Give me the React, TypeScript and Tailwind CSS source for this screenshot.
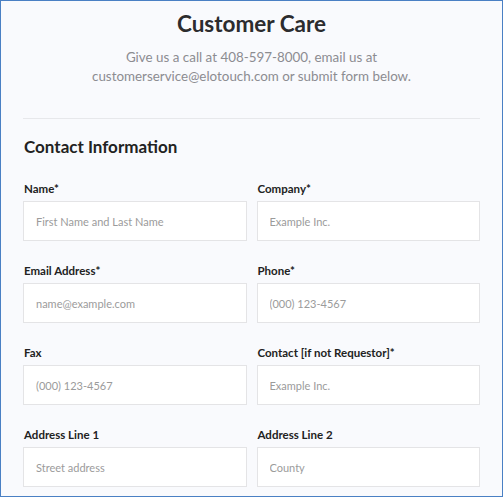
import React from "react";

const rows: [string, string, string, string][] = [
  ["Name*", "First Name and Last Name", "Company*", "Example Inc."],
  ["Email Address*", "name@example.com", "Phone*", "(000) 123-4567"],
  ["Fax", "(000) 123-4567", "Contact [if not Requestor]*", "Example Inc."],
  ["Address Line 1", "Street address", "Address Line 2", "County"],
];

function Field({ label, placeholder }: { label: string; placeholder: string }) {
  return (
    <div className="flex flex-col">
      <label className="text-[11.5px] leading-[14px] font-bold text-[#222222] mb-[5px] pl-px">{label}</label>
      <input
        readOnly
        placeholder={placeholder}
        className="h-[40px] w-full bg-white border border-[#e4e4e6] px-[12px] text-[11px] text-[#333] placeholder:text-[#9b9b9b] outline-none"
        style={{ fontFamily: "Lato, 'Open Sans', sans-serif" }}
      />
    </div>
  );
}

export default function App() {
  return (
    <div
      className="w-[503px] h-[497px] overflow-hidden border border-[#4a80c4] bg-[#f9fafd] px-[22px] pt-[9px]"
      style={{ fontFamily: "Lato, 'Open Sans', sans-serif" }}
    >
      <h1 className="text-center text-[22.5px] leading-[28px] font-bold text-[#2c2c2e]">Customer Care</h1>
      <p className="mt-[10px] text-center text-[13.4px] leading-[19px] text-[#8c8c91]">
        Give us a call at 408-597-8000, email us at
        <br />
        customerservice@elotouch.com or submit form below.
      </p>
      <div className="mt-[32px] h-px bg-[#e7e8eb]" />
      <h2 className="mt-[17px] pl-px text-[17px] leading-[22px] font-bold text-[#222222]">Contact Information</h2>
      <div className="mt-[24px] grid grid-cols-2 gap-x-[10px] gap-y-[23px]">
        {rows.map((r, i) => (
          <React.Fragment key={i}>
            <Field label={r[0]} placeholder={r[1]} />
            <Field label={r[2]} placeholder={r[3]} />
          </React.Fragment>
        ))}
      </div>
    </div>
  );
}
